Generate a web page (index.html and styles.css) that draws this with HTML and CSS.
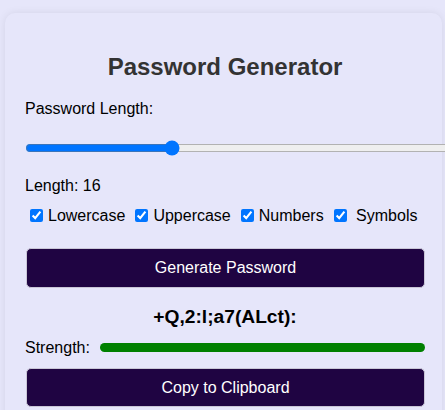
FILE: index.html
```html
<!DOCTYPE html>
<html lang="en">
<head>
<meta charset="utf-8">
<title>Password Generator</title>
<link rel="stylesheet" href="styles.css">
</head>
<body>
<div class="card">
  <h2 class="title">Password Generator</h2>
  <label class="field-label" for="len">Password Length:</label>
  <input class="slider" id="len" type="range" min="8" max="32" value="16">
  <p class="length">Length: 16</p>
  <div class="options">
    <label class="opt"><input type="checkbox" checked>Lowercase</label>
    <label class="opt"><input type="checkbox" checked>Uppercase</label>
    <label class="opt"><input type="checkbox" checked>Numbers</label>
    <label class="opt"><input type="checkbox" checked>&nbsp;Symbols</label>
  </div>
  <button class="btn btn-generate">Generate Password</button>
  <div class="password">+Q,2:l;a7(ALct):</div>
  <div class="strength">
    <span class="strength-label">Strength:</span>
    <div class="bar"><div class="bar-fill"></div></div>
  </div>
  <button class="btn btn-copy">Copy to Clipboard</button>
</div>
</body>
</html>
```
FILE: styles.css
```css
html, body {
  margin: 0;
  background: #e6e6fa;
}
body {
  padding: 13px 0 0 5px;
  font-family: "Liberation Sans", Arial, sans-serif;
  color: #000;
  overflow: hidden;
}
.card {
  box-sizing: border-box;
  width: 437px;
  padding: 20px 17px 20px 20px;
  border-radius: 10px;
  background: #e6e6fa;
  box-shadow: 0 0 8px rgba(0, 0, 0, 0.08);
}
.title {
  margin: 20px 0 20px;
  font-size: 24px;
  font-weight: bold;
  color: #333;
  text-align: center;
  line-height: 27px;
}
.field-label {
  display: block;
  font-size: 16px;
  line-height: 18px;
}
.slider {
  display: block;
  width: 433px;
  margin: 22px 0 0 0;
  height: 16px;
}
.length {
  margin: 21px 0 0;
  font-size: 16px;
  line-height: 18px;
}
.options {
  display: flex;
  gap: 6px;
  margin: 11px 0 0 1px;
  font-size: 16px;
  line-height: 19px;
  align-items: center;
}
.opt {
  display: flex;
  align-items: center;
}
.opt input {
  margin: 3px 5px 3px 4px;
}
.btn {
  display: block;
  box-sizing: border-box;
  width: 399px;
  margin-left: 1px;
  border: 1px solid #c9c6d6;
  border-radius: 5px;
  background: #1f0442;
  color: #fff;
  font-family: "Liberation Sans", Arial, sans-serif;
  font-size: 16px;
  text-align: center;
}
.btn-generate {
  height: 40px;
  margin-top: 23px;
}
.password {
  margin-top: 18px;
  font-size: 19.2px;
  font-weight: bold;
  line-height: 22px;
  text-align: center;
}
.strength {
  display: flex;
  align-items: center;
  gap: 10px;
  margin-top: 10px;
  font-size: 16px;
  line-height: 19px;
}
.bar {
  flex: 1;
  height: 9px;
  border-radius: 5px;
  overflow: hidden;
  background: #ddd;
}
.bar-fill {
  width: 100%;
  height: 100%;
  background: #008000;
}
.btn-copy {
  height: 39px;
  margin-top: 11px;
}
```
